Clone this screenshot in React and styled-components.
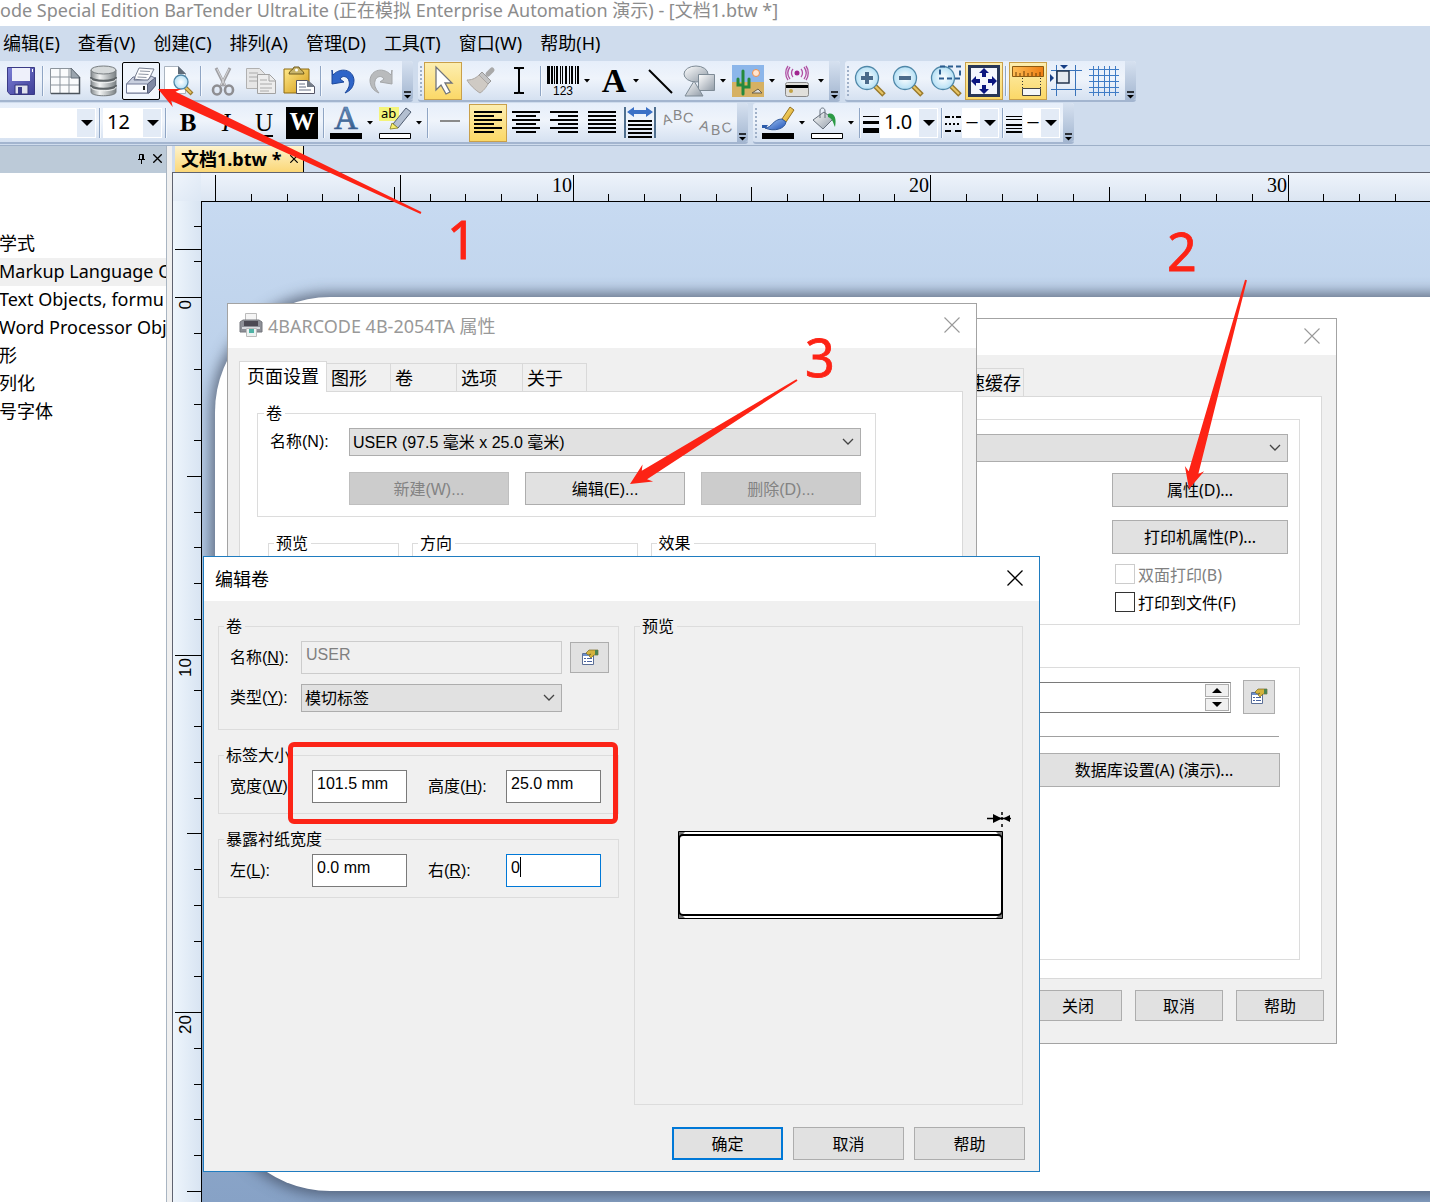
import styled, { createGlobalStyle, css } from "styled-components";

const uiFont = `"Noto Sans", "Noto Sans CJK SC", sans-serif`;
const dialogFont = `"Liberation Sans", "Noto Sans CJK SC", sans-serif`;

const GlobalStyle = createGlobalStyle`
  * {
    box-sizing: border-box;
  }
  body {
    margin: 0;
    font-family: ${uiFont};
    font-size: 18px;
    color: #000;
  }
  button, input, select {
    font: inherit;
    color: inherit;
    margin: 0;
  }
`;

const Page = styled.div`
  position: relative;
  display: flex;
  flex-direction: column;
  min-height: 100vh;
  overflow: hidden;
  background: #cfdced;
`;

const TitleBar = styled.header`
  height: 26px;
  line-height: 20px;
  background: #fff;
  color: #8c8c8c;
  white-space: nowrap;
`;

const MenuBar = styled.nav`
  display: flex;
  align-items: center;
  gap: 18px;
  height: 35px;
  padding: 0 0 2px 3px;
`;

const MenuItem = styled.button`
  border: none;
  padding: 0;
  background: none;
  line-height: 24px;
  white-space: nowrap;
`;

const ToolbarRow = styled.div`
  display: flex;
  gap: 5px;
  margin-bottom: 1px;
`;

const ToolbarBox = styled.div`
  display: flex;
  align-items: stretch;
  height: 41px;
  padding: 1px 0 0 ${(props) => props.$inset || "0"};
  background: linear-gradient(#e6eefa, #eff4fb 45%, #d5e1f1);
  border-bottom: 2px solid #a3b5cf;
  border-radius: ${(props) => (props.$first ? "0 3px 3px 0" : "3px")};
`;

const Grip = styled.span`
  width: 2px;
  margin: 4px 2px;
  background: repeating-linear-gradient(#9fb0c8 0 2px, transparent 2px 4px);
`;

const Cap = styled.button`
  display: flex;
  align-items: flex-end;
  justify-content: center;
  width: 11px;
  margin: -1px 0 0 2px;
  padding: 0 0 1px;
  border: none;
  border-radius: 0 3px 3px 0;
  background: linear-gradient(#d6e1f0, #a3b6d0);
`;

const Separator = styled.span`
  width: 6px;
  border-left: 2px solid transparent;
  margin: 4px 0;
  background: linear-gradient(90deg, #8fa5c4 1px, #f4f8fd 1px 2px, transparent 2px);
`;

const Tool = styled.button`
  display: flex;
  align-items: center;
  justify-content: center;
  flex: none;
  width: 38px;
  height: 38px;
  padding: 0;
  border: 1px solid transparent;
  background: none;
  ${(props) =>
    props.$menu &&
    css`
      justify-content: flex-start;
      gap: 5px;
      width: 49px;
      padding-left: 2px;
    `}
  ${(props) =>
    props.$active &&
    css`
      border-color: #c9a04a;
      background: linear-gradient(#fdeeb0, #fbd867);
    `}
  ${(props) =>
    props.$boxed &&
    css`
      border-color: #000;
      background: #f0f5fc;
      border-radius: 2px;
    `}
`;

const Glyph = styled.span`
  font-family: "Liberation Serif", serif;
  font-weight: ${(props) => (props.$light ? "normal" : "bold")};
  font-style: ${(props) => (props.$italic ? "italic" : "normal")};
  text-decoration: ${(props) => (props.$underline ? "underline" : "none")};
  text-decoration-thickness: 2px;
  text-underline-offset: 4px;
  font-size: 25px;
  line-height: 30px;
`;

const BlackGlyph = styled(Glyph)`
  width: 32px;
  height: 32px;
  background: #000;
  color: #fff;
`;

const ComboBox = styled.span`
  position: relative;
  display: flex;
  width: ${(props) => props.$width};
  margin: 4px 1px 4px 0;
`;

const ComboSelect = styled.select`
  appearance: none;
  width: 100%;
  border: 1px solid #fff;
  border-radius: 0;
  background: linear-gradient(90deg, #fff calc(100% - 18px), #e3ebf6 calc(100% - 18px));
  padding: 0 18px 2px 3px;
  font-size: ${(props) => (props.$line ? "12px" : "20px")};
  font-weight: ${(props) => (props.$line ? "bold" : "normal")};
  line-height: 26px;
`;

const ComboArrow = styled.svg`
  position: absolute;
  right: 3px;
  top: 12px;
  pointer-events: none;
`;

const LineIcon = styled.svg`
  align-self: center;
  margin-right: 1px;
`;

const Body = styled.div`
  flex: 1;
  display: flex;
  border-top: 1px solid #9eb0c8;
`;

const SidePanel = styled.aside`
  width: 167px;
  flex: none;
  background: #fff;
  border-right: 1px solid #a9b5c2;
  overflow: hidden;
`;

const SideHeader = styled.div`
  display: flex;
  align-items: center;
  justify-content: flex-end;
  gap: 7px;
  height: 27px;
  padding: 0 4px 2px 0;
  background: #bccad8;
`;

const IconButton = styled.button`
  display: flex;
  padding: 0;
  border: none;
  background: none;
`;

const SideList = styled.ul`
  list-style: none;
  margin: 57px 0 0 -1px;
  padding: 0;
`;

const SideItem = styled.li`
  height: 28px;
  line-height: 26px;
  white-space: nowrap;
  background: ${(props) => (props.$selected ? "#f0f0f0" : "none")};
`;

const Splitter = styled.div`
  width: 5px;
  flex: none;
  background: #f0f0f0;
`;

const Workspace = styled.main`
  flex: 1;
  display: flex;
  flex-direction: column;
  min-width: 0;
`;

const DocTabs = styled.div`
  display: flex;
  height: 26px;
  padding-left: 3px;
`;

const DocTab = styled.div`
  display: flex;
  align-items: center;
  gap: 9px;
  padding: 0 5px 0 6px;
  border-right: 1px solid #000;
  background: linear-gradient(#fdf3cd, #fbd777);
  font-weight: bold;
  line-height: 24px;
  white-space: nowrap;
`;

const Stage = styled.div`
  flex: 1;
  display: grid;
  grid-template-columns: 28px 1fr;
  grid-template-rows: 28px 1fr;
  border-top: 1px solid #5f6370;
  border-left: 1px solid #5f6370;
`;

const Corner = styled.div`
  background: linear-gradient(135deg, #f0f5fc, #dce7f4);
`;

const RulerTop = styled.svg`
  width: 100%;
  height: 28px;
  background: linear-gradient(#eef3fb, #dbe5f2);
`;

const RulerLeft = styled.svg`
  width: 28px;
  height: 100%;
  background: linear-gradient(90deg, #eef5fc, #d8e4f2);
`;

const Canvas = styled.div`
  display: flex;
  padding: 95px 0 11px 13px;
  border-top: 1px solid #000;
  border-left: 1px solid #000;
  background: linear-gradient(#c7daf1, #87a2c6);
  overflow: hidden;
`;

const Paper = styled.div`
  flex: 1;
  margin-right: -30px;
  border-radius: 115px 0 0 115px;
  background: #fff;
  box-shadow: 0 0 14px 4px rgba(60, 70, 90, 0.7);
`;

const Dialog = styled.section`
  position: absolute;
  left: ${(props) => props.$left}px;
  top: ${(props) => props.$top}px;
  width: ${(props) => props.$width}px;
  display: flex;
  flex-direction: column;
  border: 1px solid ${(props) => (props.$focused ? "#1f7cc0" : "#a3a3a3")};
  background: #f0f0f0;
  font-family: ${dialogFont};
  font-size: 16px;
`;

const DialogTitle = styled.header`
  display: flex;
  align-items: center;
  gap: 5px;
  height: ${(props) => props.$height || "44px"};
  padding: 0 16px 2px 11px;
  background: #fff;
  color: ${(props) => (props.$active ? "#000" : "#999")};
  font-family: ${uiFont};
  font-size: 18px;

  & > button {
    margin-left: auto;
  }
`;

const DialogBody = styled.div`
  padding: ${(props) => props.$padding};
`;

const TabList = styled.div`
  display: flex;
  align-items: flex-end;
  height: 30px;
  padding-left: ${(props) => props.$indent || "0"};
  font-family: ${uiFont};
  font-size: 18px;
`;

const Tab = styled.button`
  width: ${(props) => props.$width};
  height: 28px;
  padding: 0 4px;
  border: 1px solid #d9d9d9;
  border-width: 1px 1px 0 0;
  background: #f0f0f0;
  text-align: left;
  line-height: 24px;
  white-space: nowrap;
  ${(props) =>
    props.$active &&
    css`
      height: 31px;
      margin-bottom: -1px;
      padding: 0 7px 2px;
      border-left-width: 1px;
      background: #fff;
    `}
`;

const TabPanel = styled.div`
  height: ${(props) => props.$height};
  padding: ${(props) => props.$padding};
  border: 1px solid #d9d9d9;
  background: #fff;
`;

const PrintPanel = styled(TabPanel)`
  display: flex;
  flex-direction: column;
  gap: 42px;
  margin-right: 2px;
`;

const Group = styled.fieldset`
  min-width: 0;
  margin: 0;
  padding: ${(props) => props.$padding || "5px 11px 11px"};
  border: 1px solid #dcdcdc;
`;

const GroupLegend = styled.legend`
  height: 20px;
  line-height: 22px;
  padding: 0 3px 0 2px;
  margin-left: -6px;
`;

const PropertyGroups = styled.div`
  display: grid;
  grid-template-columns: 131px 1fr 1fr;
  gap: 13px;
  height: 100px;
  margin: 16px 0 0 11px;
`;

const Row = styled.div`
  display: flex;
  align-items: center;
  gap: ${(props) => props.$gap || "0"};
  margin-bottom: ${(props) => props.$after || "0"};
  justify-content: ${(props) => props.$justify || "flex-start"};
`;

const Label = styled.label`
  width: ${(props) => props.$width};
  flex: none;
  line-height: 20px;
  white-space: nowrap;
`;

const SizeRow = styled.div`
  display: flex;
  gap: 21px;
`;

const TextInput = styled.input`
  width: ${(props) => props.$width || "95px"};
  height: 33px;
  padding: 0 4px 5px;
  border: 1px solid ${(props) => (props.$focused ? "#0078d7" : "#7a7a7a")};
  background: #fff;
  outline: none;

  &:disabled {
    border-color: #ccc;
    background: #f0f0f0;
    color: #808080;
  }
`;

const CaretField = styled.span`
  position: relative;
  display: flex;

  &::after {
    content: "";
    position: absolute;
    left: 14px;
    top: 3px;
    width: 1px;
    height: 20px;
    background: #000;
  }
`;

const SelectBox = styled.span`
  position: relative;
  display: flex;
  flex: ${(props) => (props.$width ? "none" : "1")};
  width: ${(props) => props.$width || "auto"};

  & > svg {
    position: absolute;
    right: 7px;
    top: 10px;
    pointer-events: none;
  }
`;

const Select = styled.select`
  appearance: none;
  width: 100%;
  height: 28px;
  padding: 0 20px 0 3px;
  border: 1px solid #adadad;
  border-radius: 0;
  background: #e1e1e1;
`;

const PushButton = styled.button`
  display: flex;
  align-items: center;
  justify-content: center;
  width: ${(props) => props.$width || "auto"};
  flex: ${(props) => (props.$width ? "none" : "1")};
  height: ${(props) => props.$height || "33px"};
  padding: 0 0 2px;
  border: ${(props) => (props.$primary ? "2px solid #0078d7" : "1px solid #adadad")};
  background: #e1e1e1;
  white-space: nowrap;

  &:disabled {
    border-color: #bfbfbf;
    background: #ccc;
    color: #838383;
  }
`;

const PropertiesButton = styled(PushButton)`
  margin-left: 8px;
`;

const PrintForm = styled.div`
  display: flex;
  flex-direction: column;
  align-items: flex-end;
  font-family: ${uiFont};
`;

const CheckLabel = styled.label`
  display: flex;
  align-items: center;
  gap: 3px;
  width: 173px;
  height: 20px;
  margin-bottom: 8px;
  color: ${(props) => (props.$disabled ? "#808080" : "#000")};
`;

const Check = styled.input`
  appearance: none;
  width: 20px;
  height: 20px;
  border: 1px solid #333;
  background: #fff;

  &:disabled {
    border-color: #ccc;
  }
`;

const SpinnerRow = styled.div`
  display: flex;
  align-items: center;
  gap: 12px;
  padding-right: 5px;
`;

const Spinner = styled.div`
  display: flex;
  width: 330px;
  height: 31px;
  border: 1px solid #7a7a7a;
  border-right-color: #adadad;
`;

const SpinInput = styled.input`
  flex: 1;
  min-width: 0;
  border: none;
  background: #fff;
`;

const SpinButtons = styled.div`
  display: flex;
  flex-direction: column;
  gap: 1px;
  padding: 1px;
  background: #fff;

  & > button {
    display: flex;
    align-items: center;
    justify-content: center;
    flex: 1;
    width: 24px;
    padding: 0;
    border: 1px solid #acacac;
    background: #f0f0f0;
  }
`;

const Rule = styled.hr`
  width: 360px;
  margin: 22px 1px 16px 0;
  border: none;
  border-top: 1px solid #a0a0a0;
`;

const PrintFooter = styled.div`
  display: flex;
  justify-content: flex-end;
  gap: 13px;
  padding-top: 11px;
`;

const EditColumns = styled.div`
  display: flex;
  gap: 15px;
`;

const EditFields = styled.div`
  display: flex;
  flex-direction: column;
  gap: 15px;
  width: 401px;
`;

const PreviewColumn = styled.div`
  flex: 1;
  display: flex;
  padding-right: 2px;
`;

const PreviewGroup = styled(Group)`
  flex: 1;
  display: flex;
  align-items: center;
  justify-content: center;
  height: 489px;
  padding: 0;

  & > legend {
    margin-left: 5px;
  }
`;

const EditFooter = styled.div`
  display: flex;
  justify-content: flex-end;
  gap: 10px;
  margin-top: 22px;
`;

const Highlight = styled.div`
  position: absolute;
  left: 288px;
  top: 742px;
  width: 330px;
  height: 82px;
  border: 5px solid #fc2417;
  border-radius: 6px;
  pointer-events: none;
`;

const Annotations = styled.svg`
  position: absolute;
  inset: 0;
  width: 100%;
  height: 100%;
  pointer-events: none;
  fill: #fd2315;
  font-size: 52px;
`;

const HiddenDefs = styled.svg`
  position: absolute;
  width: 0;
  height: 0;
`;

const Icon = ({ children, size = 32, box = "0 0 32 32", ...rest }) => (
  <svg
    width={size}
    height={size}
    viewBox={box}
    fill="none"
    overflow="visible"
    aria-hidden="true"
    {...rest}
  >
    {children}
  </svg>
);

const DownMark = () => (
  <svg width="6" height="4" viewBox="0 0 6 4" aria-hidden="true">
    <path d="M0 0h6L3 3.5z" />
  </svg>
);

const Chevron = () => (
  <svg width="12" height="8" viewBox="0 0 12 8" fill="none" aria-hidden="true">
    <path d="M1 1l5 5 5-5" stroke="#444" strokeWidth="1.3" />
  </svg>
);

const CloseIcon = ({ size = 16, color = "currentColor", weight = 1.1 }) => (
  <svg width={size} height={size} viewBox="0 0 16 16" aria-hidden="true">
    <path d="M.5.5l15 15M15.5.5l-15 15" stroke={color} strokeWidth={weight} />
  </svg>
);

const Gradients = () => (
  <HiddenDefs aria-hidden="true">
    <defs>
      <linearGradient id="silver" x1="0" x2="1" y2="1">
        <stop stopColor="#fff" />
        <stop offset="1" stopColor="#8f9aa6" />
      </linearGradient>
      <linearGradient id="metal">
        <stop stopColor="#858b8e" />
        <stop offset=".35" stopColor="#f2f4f4" />
        <stop offset="1" stopColor="#7b8285" />
      </linearGradient>
      <linearGradient id="violet" y2="1" x2="1">
        <stop stopColor="#7c7fd6" />
        <stop offset="1" stopColor="#3c3d96" />
      </linearGradient>
      <linearGradient id="blue" y2="1" x2="1">
        <stop stopColor="#a9cdf8" />
        <stop offset="1" stopColor="#1d4fb4" />
      </linearGradient>
      <linearGradient id="gold" y2="1" x2="1">
        <stop stopColor="#ffe98b" />
        <stop offset="1" stopColor="#d39a15" />
      </linearGradient>
      <linearGradient id="orange" y2="0" x2="1">
        <stop stopColor="#ffbe55" />
        <stop offset="1" stopColor="#ee7d12" />
      </linearGradient>
      <linearGradient id="steel" x2="0" y2="1">
        <stop stopColor="#7ea3cc" />
        <stop offset="1" stopColor="#234a7c" />
      </linearGradient>
      <radialGradient id="lens">
        <stop stopColor="#fff" />
        <stop offset="1" stopColor="#b5e0f5" />
      </radialGradient>
    </defs>
  </HiddenDefs>
);

const SaveIcon = () => (
  <Icon>
    <path d="M2.500 2.500h27v27H5l-2.500-3z" fill="url(#violet)" stroke="#3a3a85" />
    <path d="M7 3h18v13H7z" fill="#eef0fa" />
    <path d="M10 20h13v9H10z" fill="#dfe2ee" stroke="#33357c" />
    <path d="M13 22h4v7h-4z" fill="#3b3d8c" />
    <path d="M27.500 4v3" stroke="#fff" />
  </Icon>
);

const TemplateIcon = () => (
  <Icon>
    <path d="M1.500 3.500h21l8 8v17h-29z" fill="#fafbfc" stroke="#8c949c" />
    <path d="M22 3l9 10h-9z" fill="#9aa4ad" stroke="#66707a" />
    <path d="M2 12h20M2 20h28M11 4v24M20 4v24" stroke="#8c949c" />
    <path d="M30.500 12v16.500H2" stroke="#4c545c" strokeWidth="1.500" />
  </Icon>
);

const DatabaseIcon = () => (
  <Icon>
    <path d="M4 5v22c0 5 25 5 25 0V5z" fill="url(#metal)" stroke="#777d80" />
    <ellipse cx="16.500" cy="5" rx="12.500" ry="4" fill="#d5d9da" stroke="#777d80" />
    <path d="M4 12c0 5 25 5 25 0M4 20c0 5 25 5 25 0" stroke="#5f6568" strokeWidth="2" />
    <path d="M4 14c0 5 25 5 25 0M4 22c0 5 25 5 25 0" stroke="#f0f2f2" />
  </Icon>
);

const PrintIcon = () => (
  <Icon>
    <path d="M9 14l5-11 15 1-6 12z" fill="#fdfdfe" stroke="#777f91" />
    <path d="M15 6l10 .5M13.500 9l10 .5M12.500 12l9 .5" stroke="#8e95a3" />
    <path d="M1.500 19L8 12h2l-1 3h14l3-4 4 2v8l-6 7h-22.500z" fill="#c9cfdf" stroke="#69718a" />
    <path d="M1.500 19h21v9h-21z" fill="#fafbff" stroke="#727b98" />
    <path d="M22.500 19l8-6.500v8L24 28h-1.500z" fill="#8088a3" stroke="#59617c" />
    <path d="M19 21v4" stroke="#222" strokeWidth="2" />
  </Icon>
);

const Magnifier = ({ children, small }) => (
  <>
    <path d={small ? "M22 22l7 7" : "M21 21l9 9"} stroke="#9a7a2c" strokeWidth={small ? 4 : 5} />
    <path d={small ? "M22 22l6 6" : "M21 21l8 8"} stroke="#e8c565" strokeWidth="2" />
    <circle
      cx={small ? 18 : 13}
      cy={small ? 17 : 13}
      r={small ? 7 : 11.5}
      fill="url(#lens)"
      stroke="#4f87a8"
      strokeWidth="1.300"
    />
    {children}
  </>
);

const PreviewIcon = () => (
  <Icon>
    <path d="M1.500 1.500h14l7 7v20h-21z" fill="#fff" stroke="#aab4c0" />
    <path d="M15 1l8 8h-8z" fill="#5f6b78" />
    <Magnifier small />
  </Icon>
);

const CutIcon = () => (
  <Icon>
    <path d="M9 3l9 18M23 3l-9 18" stroke="#a0a0a4" strokeWidth="3" />
    <path d="M10 4l8 16M22 4l-8 16" stroke="#d8d8da" />
    <ellipse cx="10" cy="25" rx="4" ry="4.500" stroke="#8e8e92" strokeWidth="2.600" />
    <ellipse cx="22" cy="25" rx="4" ry="4.500" stroke="#8e8e92" strokeWidth="2.600" />
  </Icon>
);

const CopyIcon = () => (
  <Icon>
    <path d="M1.500 3.500h13l5 5v15h-18z" fill="#e6e6e6" stroke="#b0b0b0" />
    <path d="M4 8h9M4 12h12M4 16h12" stroke="#aaa" />
    <path d="M12.500 9.500h12l6 6v13h-18z" fill="#ededed" stroke="#a2a2a2" />
    <path d="M24 9v7h7" stroke="#a2a2a2" />
    <path d="M15 15h7M15 19h12M15 23h12M15 26h9" stroke="#aaa" />
  </Icon>
);

const PasteIcon = () => (
  <Icon>
    <path d="M1 4h25v24H1z" fill="url(#gold)" stroke="#8d6a13" />
    <path d="M6 9c0-4 4-3 5-7h5c1 4 5 3 5 7z" fill="#c8b46a" stroke="#6e5a1d" />
    <circle cx="13.500" cy="5" r="1.500" fill="#fff" />
    <path d="M13.500 15.500h11l7 6v7h-18z" fill="#fff" stroke="#556" />
    <path d="M24 15v7h8z" fill="#737c88" />
    <path d="M16 19h6M16 22h7M16 25h12" stroke="#667085" />
  </Icon>
);

const UndoIcon = ({ gray }) => (
  <Icon>
    <path
      transform={gray ? "translate(32 0) scale(-1 1)" : undefined}
      d="M5 5l1 5c7-8 20-6 21 5 0 7-4 11-9 13 4-5 5-8 4-12-1-5-7-6-9-2l4 3-12 2z"
      fill={gray ? "#b9bbbd" : "#2f65c8"}
      stroke={gray ? "#a4a6a8" : "#1b479b"}
    />
  </Icon>
);

const PointerIcon = () => (
  <Icon>
    <path d="M9 2v23l5-5 5 9 4-2-5-9h7z" fill="#fff" stroke="#70747c" strokeWidth="1.300" />
  </Icon>
);

const BroomIcon = () => (
  <Icon>
    <path d="M23 9l4-4" stroke="#a9a9a9" strokeWidth="5" strokeLinecap="round" />
    <path d="M17 7l9 9-3 3-9-9z" fill="#c4c4c4" stroke="#999" />
    <path d="M14 10l9 9c-3 5-5 7-8 9C10 25 4 19 2 15c4 0 8-1 12-5z" fill="#cfcac4" stroke="#aca7a2" />
  </Icon>
);

const TextCursorIcon = () => (
  <Icon>
    <path d="M11 3h4l1 1 1-1h4M11 28h4l1-1 1 1h4M16 4v23" stroke="#000" strokeWidth="2" />
  </Icon>
);

const bars = [0, 4, 7, 9, 13, 15, 18, 22, 24, 28, 30];
const barWidths = [3, 2, 1, 2, 1, 1, 2, 1, 2, 1, 2];

const BarcodeIcon = () => (
  <Icon fontFamily="Liberation Sans" fontSize="12">
    {bars.map((x, i) => (
      <rect key={x} x={x} y="1" width={barWidths[i]} height="18" fill="#000" />
    ))}
    <text x="16" y="30" textAnchor="middle" fill="#000">123</text>
  </Icon>
);

const ShapesIcon = () => (
  <Icon>
    <ellipse cx="13" cy="9" rx="12" ry="8" fill="url(#silver)" stroke="#7e8b96" />
    <path d="M15.500 9.500h16v16h-16z" fill="url(#silver)" stroke="#7e8b96" />
    <path d="M11 16l9 15H2z" fill="url(#silver)" stroke="#7e8b96" />
  </Icon>
);

const PictureIcon = () => (
  <Icon>
    <path d="M0 0h32v32H0z" fill="#8cb6ea" />
    <path d="M0 17h32v15H0z" fill="#d6b163" />
    <circle cx="24" cy="8" r="3.500" fill="#ffe5d0" stroke="#ee8f4c" />
    <path d="M11 29V6M11 20H6v-6M11 22h6v-8" stroke="#25893d" strokeWidth="3" strokeLinecap="round" />
    <path d="M20 28l6-4 4 4z" fill="#ddd" stroke="#6c6047" />
  </Icon>
);

const RfidIcon = () => (
  <Icon>
    <circle cx="16" cy="8" r="2.500" fill="#a1258f" />
    <path
      d="M12 4c-2 2-2 6 0 8M9 2c-3 4-3 8 0 12M7 1C4 5 4 11 7 15M20 4c2 2 2 6 0 8M23 2c3 4 3 8 0 12M25 1c3 4 3 10 0 14"
      stroke="#b04fa3"
      strokeWidth="1.300"
    />
    <rect x="4.500" y="17.500" width="23" height="14" rx="2" fill="#e0dfdb" stroke="#888" />
    <path d="M5 20h22v3H5z" fill="#000" />
    <circle cx="10" cy="26" r="2" fill="#c2a244" />
  </Icon>
);

const ZoomIcon = ({ mode }) => (
  <Icon>
    <Magnifier>
      {mode === "in" && <path d="M7 13h12M13 7v12" stroke="#4b6b8a" strokeWidth="4" />}
      {mode === "out" && <path d="M7 13h12" stroke="#4b6b8a" strokeWidth="4" />}
      {mode === "area" && (
        <path d="M10 1.500h20v12H10z" stroke="#2c5d8f" strokeWidth="2" strokeDasharray="5 3" />
      )}
    </Magnifier>
  </Icon>
);

const FitIcon = () => (
  <Icon>
    <path d="M1.500 1.500h29v29h-29z" fill="#f3f6fd" stroke="#273657" strokeWidth="3" />
    <path
      d="M16 3l5 5h-3v4h-4V8h-3zM16 29l5-5h-3v-4h-4v4h-3zM3 16l5-5v3h4v4H8v3zM29 16l-5-5v3h-4v4h4v3z"
      fill="#0a1680"
    />
  </Icon>
);

const RulersIcon = () => (
  <Icon>
    <path d="M.5 1.500h31v10H.5z" fill="url(#orange)" stroke="#8b5a12" />
    <path d="M4 11V7M8 11V8M12 11V6M16 11V8M20 11V7M24 11V8M28 11V7" stroke="#6b3c05" />
    <path d="M10.500 13v10M28.500 13v10" stroke="#333" strokeDasharray="1 2" />
    <path d="M10.500 23.500h18v7h-18z" fill="#f4f6f8" stroke="#444" />
  </Icon>
);

const SnapIcon = () => (
  <Icon>
    <path d="M1 5.500h31M1 24.500h31M6.500 0v31M25.500 0v31" stroke="#3973ba" />
    <path d="M7 6h12v12H7z" fill="#e4e9ef" stroke="#23354d" strokeWidth="1.500" />
    <path d="M10 0h8l-4 4zM0 9v8l4-4z" fill="#173f86" />
  </Icon>
);

const GridIcon = () => (
  <Icon>
    <path
      d="M1 4.500h30M1 10.500h30M1 16.500h30M1 22.500h30M1 27.500h30M5.500 1v30M10.500 1v30M16.500 1v30M21.500 1v30M27.500 1v30"
      stroke="#3f7cc6"
    />
  </Icon>
);

const FontColorIcon = () => (
  <Icon fontFamily="Liberation Serif" fontSize="33">
    <text x="16" y="22" textAnchor="middle" fill="url(#steel)" stroke="#3f6699" strokeWidth=".7">A</text>
    <path d="M0 26h32v6H0z" fill="#000" />
  </Icon>
);

const HighlighterIcon = () => (
  <Icon fontFamily="Noto Sans" fontSize="13">
    <path d="M0 0h20v14H0z" fill="#f4f47b" />
    <text x="2" y="11" fill="#000">ab</text>
    <path d="M14 17L27 1l5 4-13 16z" fill="#b3bfd0" stroke="#4f5c70" />
    <path d="M13 16l6 5-8 1z" fill="#f7ee6b" stroke="#98923a" />
    <path d="M.5 26.500h31v5H.5z" fill="#fff" stroke="#000" />
  </Icon>
);

const lineSets = {
  left: [[2, 28], [2, 20], [2, 28], [2, 20], [2, 28], [2, 20]],
  center: [[2, 28], [6, 20], [2, 28], [6, 20], [2, 28], [6, 20]],
  right: [[2, 28], [10, 20], [2, 28], [10, 20], [2, 28], [10, 20]],
  full: [[2, 28], [2, 28], [2, 28], [2, 28], [2, 28], [2, 28]],
};

const AlignIcon = ({ kind }) => (
  <Icon>
    {lineSets[kind].map(([x, width], i) => (
      <rect key={i} x={x} y={4 + i * 4} width={width} height="2" fill="#000" />
    ))}
  </Icon>
);

const FitWidthIcon = () => (
  <Icon>
    <path d="M1 0v31M31 0v31" stroke="#4f6f8f" strokeWidth="2" />
    <path d="M3 5l7-5v3h12V0l7 5-7 5V7H10v3z" fill="#3a70c6" />
    <path d="M4 14h24M4 18h24M4 22h24M4 26h24M4 30h24" stroke="#000" strokeWidth="2" />
  </Icon>
);

const ArcTextIcon = ({ down }) => (
  <Icon fontFamily="Liberation Sans" fontSize="14">
    <g fill="#868686">
      <text x="1" y={down ? 24 : 17} transform={`rotate(${down ? 16 : -16} 6 15)`}>A</text>
      <text x="11" y={down ? 28 : 13}>B</text>
      <text x="20" y={down ? 26 : 15} transform={`rotate(${down ? -14 : 14} 24 14)`}>C</text>
    </g>
  </Icon>
);

const PaintBrushIcon = () => (
  <Icon>
    <path d="M20 12L28 0l4 3-8 12z" fill="url(#gold)" stroke="#947020" />
    <path d="M3 21c7 0 8-9 17-9l4 3c-1 7-12 10-21 6z" fill="url(#blue)" stroke="#315a9c" />
    <path d="M0 18h6l-2 3H0z" fill="#2c5cab" />
    <path d="M0 26h32v6H0z" fill="#000" />
  </Icon>
);

const BucketIcon = () => (
  <Icon>
    <path d="M2 13l11-8 9 7-10 10z" fill="url(#silver)" stroke="#66707c" />
    <path d="M9 11V4c0-4 5-4 5 0v7" stroke="#66707c" />
    <path d="M17 7c6-2 9 4 7 13-2-4-2-8-7-10z" fill="#2b9a45" />
    <path d="M.5 26.500h31v5H.5z" fill="#fff" stroke="#000" />
  </Icon>
);

const PropertiesIcon = () => (
  <Icon size={18} box="0 0 18 18">
    <path d="M1.500 5.500h11v11h-11z" fill="#fff" stroke="#5b6f96" />
    <path d="M2 6h10v2H2z" fill="#6d8fc9" />
    <path d="M3 10.500h2M6 10.500h5M3 13.500h2M6 13.500h5" stroke="#4a64a0" />
    <path d="M5 5l3-3h9v5h-4l-3 3-2-2 2-2-3 1z" fill="#d4b23b" stroke="#7a6a24" strokeWidth=".7" />
    <path d="M14 2h3v5h-3z" fill="#4c8250" />
  </Icon>
);

const PrinterIcon = () => (
  <Icon size={24} box="0 0 24 24">
    <path d="M6.500.5h11v9h-11z" fill="#f5f5f5" stroke="#bbb" />
    <path d="M1 9l3-2h16l3 2v10H1z" fill="#8d9097" stroke="#74777d" />
    <path d="M5 8h14v5H5z" fill="#4b4a53" />
    <path d="M3 15h18" stroke="#d9dce0" strokeWidth="2" />
    <path d="M7.500 15.500h10v8h-10z" fill="#ecf2f1" stroke="#bbb" />
    <path d="M10 16h5v4h-5z" fill="#4fb3a6" />
  </Icon>
);

const Drop = ({ children, label }) => (
  <Tool $menu aria-label={label}>
    {children}
    <DownMark />
  </Tool>
);

const Toolbar = ({ children, first, inset }) => (
  <ToolbarBox $first={first} $inset={inset}>
    {!first && <Grip />}
    {children}
    <Cap aria-label="选项">
      <svg width="7" height="8" viewBox="0 0 7 8" aria-hidden="true">
        <path d="M0 1h7" stroke="#000" strokeWidth="1.500" />
        <path d="M0 4h7L3.500 7.500z" />
      </svg>
    </Cap>
  </ToolbarBox>
);

const Combo = ({ value, width, label, line }) => (
  <ComboBox $width={width}>
    <ComboSelect aria-label={label} $line={line}>
      <option>{value}</option>
    </ComboSelect>
    <ComboArrow width="12" height="6" viewBox="0 0 12 6">
      <path d="M0 0h12L6 6z" />
    </ComboArrow>
  </ComboBox>
);

const Dropdown = ({ value, width, ...rest }) => (
  <SelectBox $width={width}>
    <Select {...rest}>
      <option>{value}</option>
    </Select>
    <Chevron />
  </SelectBox>
);

// One ruler division is 35.75px, ten of them make a numbered mark.
const STEP = 35.75;

const Ruler = ({ vertical, origin, from, to, cursor }) => {
  const marks = [];
  for (let i = from; i <= to; i++) {
    const at = Math.round(origin + i * STEP);
    const start = i % 10 === 0 ? 2 : i % 5 === 0 ? 14 : 21;
    marks.push({ i, at, start });
  }
  const Box = vertical ? RulerLeft : RulerTop;
  const line = (at, start) => (vertical ? `M${start} ${at}.5H28` : `M${at}.5 ${start}V28`);

  return (
    <Box aria-hidden="true">
      <path
        d={marks.map((mark) => line(mark.at, mark.start)).join("") + line(cursor, 2)}
        stroke="#000"
        fill="none"
      />
      {marks
        .filter((mark) => mark.i % 10 === 0 && (vertical || mark.i > 0))
        .map((mark) =>
          vertical ? (
            <text
              key={mark.i}
              transform={`translate(18 ${mark.at + 3}) rotate(-90)`}
              textAnchor="end"
              fontFamily="Liberation Sans"
              fontSize="17"
            >
              {mark.i}
            </text>
          ) : (
            <text
              key={mark.i}
              x={mark.at - 1}
              y="19"
              textAnchor="end"
              fontFamily="Liberation Serif"
              fontSize="20"
            >
              {mark.i}
            </text>
          )
        )}
    </Box>
  );
};

// Tapered arrow, thin at its tail and 10px thick at the head.
const Arrow = ({ tail, tip }) => {
  const length = Math.hypot(tail[0] - tip[0], tail[1] - tip[1]);
  const ux = (tail[0] - tip[0]) / length;
  const uy = (tail[1] - tip[1]) / length;
  const point = (along, side) =>
    `${tip[0] + ux * along - uy * side},${tip[1] + uy * along + ux * side}`;
  const points = [
    point(0, 0),
    point(21, 10),
    point(17, 5),
    point(length, 1),
    point(length, -1),
    point(17, -5),
    point(21, -10),
  ];
  return <polygon points={points.join(" ")} />;
};

const menus = ["编辑(E)", "查看(V)", "创建(C)", "排列(A)", "管理(D)", "工具(T)", "窗口(W)", "帮助(H)"];

const sideItems = [
  "学式",
  "Markup Language O",
  "Text Objects, formu",
  "Word Processor Obj",
  "形",
  "列化",
  "号字体",
];

const MainToolbars = () => (
  <>
    <ToolbarRow>
      <Toolbar first inset="2px">
        <Tool aria-label="保存"><SaveIcon /></Tool>
        <Separator />
        <Tool aria-label="模板"><TemplateIcon /></Tool>
        <Tool aria-label="数据库"><DatabaseIcon /></Tool>
        <Tool $boxed aria-label="打印"><PrintIcon /></Tool>
        <Tool aria-label="预览"><PreviewIcon /></Tool>
        <Separator />
        <Tool aria-label="剪切"><CutIcon /></Tool>
        <Tool aria-label="复制"><CopyIcon /></Tool>
        <Tool aria-label="粘贴"><PasteIcon /></Tool>
        <Separator />
        <Tool aria-label="撤消"><UndoIcon /></Tool>
        <Tool aria-label="恢复"><UndoIcon gray /></Tool>
      </Toolbar>
      <Toolbar>
        <Tool $active aria-label="选择"><PointerIcon /></Tool>
        <Tool aria-label="格式刷"><BroomIcon /></Tool>
        <Tool aria-label="编辑文本"><TextCursorIcon /></Tool>
        <Separator />
        <Drop label="条形码"><BarcodeIcon /></Drop>
        <Drop label="文本">
          <Icon fontFamily="Liberation Serif" fontSize="34" fontWeight="bold">
            <text x="18" y="27" textAnchor="middle" fill="#000">A</text>
          </Icon>
        </Drop>
        <Tool aria-label="线条">
          <Icon><path d="M4 5l23 23" stroke="#000" strokeWidth="2" /></Icon>
        </Tool>
        <Drop label="形状"><ShapesIcon /></Drop>
        <Drop label="图片"><PictureIcon /></Drop>
        <Drop label="RFID"><RfidIcon /></Drop>
      </Toolbar>
      <Toolbar>
        <Tool aria-label="放大"><ZoomIcon mode="in" /></Tool>
        <Tool aria-label="缩小"><ZoomIcon mode="out" /></Tool>
        <Tool aria-label="缩放区域"><ZoomIcon mode="area" /></Tool>
        <Tool $active aria-label="适合窗口"><FitIcon /></Tool>
        <Separator />
        <Tool $active aria-label="标尺"><RulersIcon /></Tool>
        <Tool aria-label="对齐"><SnapIcon /></Tool>
        <Tool aria-label="网格"><GridIcon /></Tool>
      </Toolbar>
    </ToolbarRow>
    <ToolbarRow>
      <Toolbar first>
        <Combo label="字体" value="" width="96px" />
        <Separator />
        <Combo label="字号" value="12" width="59px" />
        <Separator />
        <Tool aria-label="粗体"><Glyph>B</Glyph></Tool>
        <Tool aria-label="斜体"><Glyph $light $italic>I</Glyph></Tool>
        <Tool aria-label="下划线"><Glyph $light $underline>U</Glyph></Tool>
        <Tool aria-label="反白"><BlackGlyph>W</BlackGlyph></Tool>
        <Separator />
        <Drop label="字体颜色"><FontColorIcon /></Drop>
        <Drop label="突出显示"><HighlighterIcon /></Drop>
        <Separator />
        <Tool aria-label="线">
          <Icon><path d="M6 14h20" stroke="#8a8a8a" strokeWidth="2" /></Icon>
        </Tool>
        <Tool $active aria-label="左对齐"><AlignIcon kind="left" /></Tool>
        <Tool aria-label="居中"><AlignIcon kind="center" /></Tool>
        <Tool aria-label="右对齐"><AlignIcon kind="right" /></Tool>
        <Tool aria-label="两端对齐"><AlignIcon kind="full" /></Tool>
        <Tool aria-label="适合宽度"><FitWidthIcon /></Tool>
        <Tool aria-label="上弧"><ArcTextIcon /></Tool>
        <Tool aria-label="下弧"><ArcTextIcon down /></Tool>
      </Toolbar>
      <Toolbar>
        <Drop label="线条颜色"><PaintBrushIcon /></Drop>
        <Drop label="填充颜色"><BucketIcon /></Drop>
        <Separator />
        <LineIcon width="16" height="22" viewBox="0 0 16 22">
          <path d="M0 4h16v1H0zM0 9h16v3H0zM0 16h16v5H0z" />
        </LineIcon>
        <Combo label="线宽" value="1.0" width="58px" />
        <Separator />
        <LineIcon width="16" height="22" viewBox="0 0 16 22" stroke="#000" strokeWidth="2">
          <path d="M0 5h16" strokeDasharray="5 2 2 2" />
          <path d="M0 12h16" strokeDasharray="2 2" />
          <path d="M0 19h16" strokeDasharray="6 4" />
        </LineIcon>
        <Combo label="线型" value="—" width="37px" line />
        <Separator />
        <LineIcon width="16" height="22" viewBox="0 0 16 22">
          <path d="M0 4h16v1H0zM0 7h16v1H0zM0 12h16v2H0zM0 16h16v1H0zM0 19h16v2H0z" />
        </LineIcon>
        <Combo label="复合线" value="—" width="37px" line />
      </Toolbar>
    </ToolbarRow>
  </>
);

const PrintDialog = () => (
  <Dialog $left={700} $top={318} $width={637}>
    <DialogTitle $height="36px">
      <IconButton aria-label="关闭"><CloseIcon /></IconButton>
    </DialogTitle>
    <DialogBody $padding="11px 12px 22px 13px">
      <TabList $indent="249px">
        <Tab $width="61px">速缓存</Tab>
      </TabList>
      <PrintPanel $height="583px" $padding="22px 21px 0">
        <Group $padding="14px 11px 4px">
          <PrintForm>
            <Row $after="11px">
              <Dropdown value="" width="400px" aria-label="打印机" />
            </Row>
            <Row $after="13px">
              <PushButton $width="176px" $height="34px">属性(D)...</PushButton>
            </Row>
            <Row $after="10px">
              <PushButton $width="176px" $height="34px">打印机属性(P)...</PushButton>
            </Row>
            <CheckLabel $disabled><Check type="checkbox" disabled />双面打印(B)</CheckLabel>
            <CheckLabel><Check type="checkbox" />打印到文件(F)</CheckLabel>
          </PrintForm>
        </Group>
        <Group $padding="12px 19px 172px 0">
          <PrintForm>
            <SpinnerRow>
              <Spinner>
                <SpinInput aria-label="份数" />
                <SpinButtons>
                  <button aria-label="增加">
                    <svg width="10" height="5"><path d="M0 5h10L5 0z" /></svg>
                  </button>
                  <button aria-label="减少">
                    <svg width="10" height="5"><path d="M0 0h10L5 5z" /></svg>
                  </button>
                </SpinButtons>
              </Spinner>
              <PushButton $width="32px" $height="34px" aria-label="份数属性">
                <PropertiesIcon />
              </PushButton>
            </SpinnerRow>
            <Rule />
            <PushButton $width="252px" $height="34px">数据库设置(A) (演示)...</PushButton>
          </PrintForm>
        </Group>
      </PrintPanel>
      <PrintFooter>
        <PushButton $width="88px" $height="31px">关闭</PushButton>
        <PushButton $width="88px" $height="31px">取消</PushButton>
        <PushButton $width="88px" $height="31px">帮助</PushButton>
      </PrintFooter>
    </DialogBody>
  </Dialog>
);

const PropertiesDialog = () => (
  <Dialog $left={227} $top={303} $width={750}>
    <DialogTitle>
      <PrinterIcon />
      4BARCODE 4B-2054TA 属性
      <IconButton aria-label="关闭"><CloseIcon /></IconButton>
    </DialogTitle>
    <DialogBody $padding="13px 13px 13px 11px">
      <TabList>
        <Tab $active $width="88px">页面设置</Tab>
        <Tab $width="64px">图形</Tab>
        <Tab $width="66px">卷</Tab>
        <Tab $width="66px">选项</Tab>
        <Tab $width="64px">关于</Tab>
      </TabList>
      <TabPanel $height="300px" $padding="11px 86px 0 17px">
        <Group $padding="5px 14px 11px 12px">
          <GroupLegend>卷</GroupLegend>
          <Row $after="16px">
            <Label $width="79px" htmlFor="roll">名称(N):</Label>
            <Dropdown id="roll" value="USER (97.5 毫米 x 25.0 毫米)" />
          </Row>
          <Row $gap="16px" $justify="flex-end">
            <PushButton $width="160px" disabled>新建(W)...</PushButton>
            <PushButton $width="160px">编辑(E)...</PushButton>
            <PushButton $width="160px" disabled>删除(D)...</PushButton>
          </Row>
        </Group>
        <PropertyGroups>
          <Group><GroupLegend>预览</GroupLegend></Group>
          <Group><GroupLegend>方向</GroupLegend></Group>
          <Group><GroupLegend>效果</GroupLegend></Group>
        </PropertyGroups>
      </TabPanel>
    </DialogBody>
  </Dialog>
);

const EditDialog = () => (
  <Dialog $focused $left={203} $top={556} $width={837}>
    <DialogTitle $active>
      编辑卷
      <IconButton aria-label="关闭"><CloseIcon weight={1.3} /></IconButton>
    </DialogTitle>
    <DialogBody $padding="15px 14px 11px">
      <EditColumns>
        <EditFields>
          <Group $padding="5px 9px 17px 11px">
            <GroupLegend>卷</GroupLegend>
            <Row $after="10px">
              <Label $width="71px" htmlFor="name">名称(<u>N</u>):</Label>
              <TextInput id="name" $width="261px" defaultValue="USER" disabled />
              <PropertiesButton $width="39px" $height="31px" aria-label="名称属性">
                <PropertiesIcon />
              </PropertiesButton>
            </Row>
            <Row>
              <Label $width="71px" htmlFor="type">类型(<u>Y</u>):</Label>
              <Dropdown id="type" value="模切标签" width="261px" />
            </Row>
          </Group>
          <Group $padding="5px 11px 10px">
            <GroupLegend>标签大小</GroupLegend>
            <SizeRow>
              <Row>
                <Label $width="82px" htmlFor="width">宽度(<u>W</u>):</Label>
                <TextInput id="width" defaultValue="101.5 mm" />
              </Row>
              <Row>
                <Label $width="78px" htmlFor="height">高度(<u>H</u>):</Label>
                <TextInput id="height" defaultValue="25.0 mm" />
              </Row>
            </SizeRow>
          </Group>
          <Group $padding="5px 11px 10px">
            <GroupLegend>暴露衬纸宽度</GroupLegend>
            <SizeRow>
              <Row>
                <Label $width="82px" htmlFor="left">左(<u>L</u>):</Label>
                <TextInput id="left" defaultValue="0.0 mm" />
              </Row>
              <Row>
                <Label $width="78px" htmlFor="right">右(<u>R</u>):</Label>
                <CaretField>
                  <TextInput id="right" $focused defaultValue="0" />
                </CaretField>
              </Row>
            </SizeRow>
          </Group>
        </EditFields>
        <PreviewColumn>
          <PreviewGroup>
            <GroupLegend>预览</GroupLegend>
            <svg width="367" height="121" viewBox="645 810 367 121" fill="none" aria-hidden="true">
              <path d="M678.500 831.500h324v87h-324z" fill="#fff" stroke="#000" />
              <path d="M679 832h6l-6 6zM1002 832h-6l6 6zM679 918h6l-6-6zM1002 918h-6l6-6z" fill="#777" />
              <rect x="679" y="835" width="323" height="80" rx="4" fill="#fff" stroke="#000" strokeWidth="2" />
              <path d="M987 818.500h24M1002 812v3M1002 817v3M1002 824v3" stroke="#000" strokeWidth="1.500" />
              <path d="M993 814v9l9-4.500zM1010 815v7l-7-3.500z" fill="#000" />
            </svg>
          </PreviewGroup>
        </PreviewColumn>
      </EditColumns>
      <EditFooter>
        <PushButton $primary $width="111px">确定</PushButton>
        <PushButton $width="111px">取消</PushButton>
        <PushButton $width="111px">帮助</PushButton>
      </EditFooter>
    </DialogBody>
  </Dialog>
);

export default function App() {
  return (
    <Page>
      <GlobalStyle />
      <Gradients />
      <TitleBar>
        ode Special Edition BarTender UltraLite (正在模拟 Enterprise Automation 演示) - [文档1.btw *]
      </TitleBar>
      <MenuBar>
        {menus.map((menu) => (
          <MenuItem key={menu}>{menu}</MenuItem>
        ))}
      </MenuBar>
      <MainToolbars />
      <Body>
        <SidePanel>
          <SideHeader>
            <IconButton aria-label="固定">
              <svg width="9" height="10" viewBox="0 0 9 10" fill="none" stroke="#000">
                <path d="M2.500 5.500v-5h4v5M1 5.500h7M4.500 6v4M5.500 1v4" />
              </svg>
            </IconButton>
            <IconButton aria-label="关闭"><CloseIcon size={9} weight={2.4} color="#000" /></IconButton>
          </SideHeader>
          <SideList>
            {sideItems.map((item, index) => (
              <SideItem key={item} $selected={index === 1}>{item}</SideItem>
            ))}
          </SideList>
        </SidePanel>
        <Splitter />
        <Workspace>
          <DocTabs>
            <DocTab>
              文档1.btw *
              <IconButton aria-label="关闭"><CloseIcon size={8} weight={2.4} color="#000" /></IconButton>
            </DocTab>
          </DocTabs>
          <Stage>
            <Corner />
            <Ruler origin={14} from={0} to={60} cursor={199} />
            <Ruler vertical origin={96} from={-2} to={50} cursor={48} />
            <Canvas>
              <Paper />
            </Canvas>
          </Stage>
        </Workspace>
      </Body>
      <PrintDialog />
      <PropertiesDialog />
      <EditDialog />
      <Highlight />
      <Annotations>
        <Arrow tip={[158, 89]} tail={[421, 213]} />
        <Arrow tip={[1189, 489]} tail={[1246, 280]} />
        <Arrow tip={[630, 484]} tail={[797, 380]} />
        <g stroke="#fd2315" strokeWidth=".8">
          <text x="447" y="259">1</text>
          <text x="1167" y="271">2</text>
          <text x="805" y="377">3</text>
        </g>
      </Annotations>
    </Page>
  );
}
